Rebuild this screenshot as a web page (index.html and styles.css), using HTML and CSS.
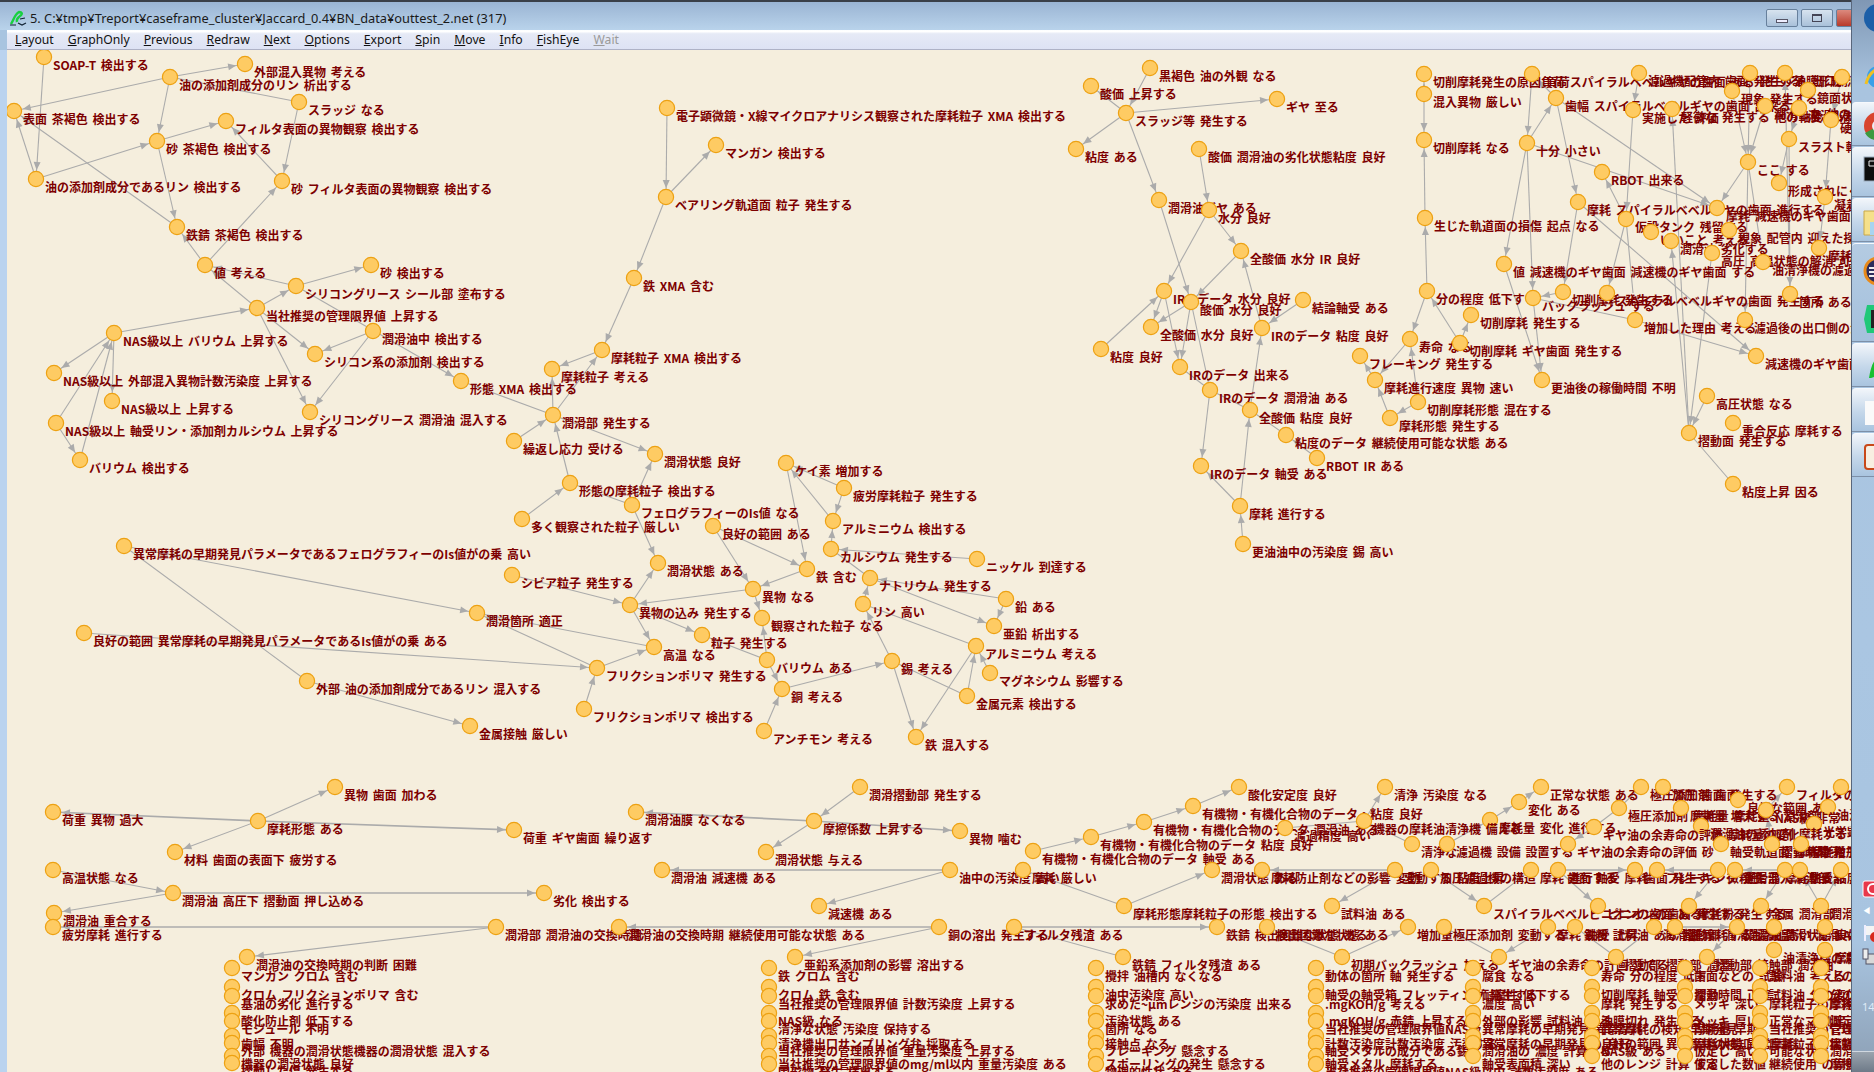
FILE: index.html
```html
<!DOCTYPE html>
<html lang="ja">
<head>
<meta charset="utf-8">
<title>Pajek</title>
<link rel="stylesheet" href="styles.css">
</head>
<body>
<div class="window">
<header class="titlebar">
<svg class="appicon" viewBox="0 0 18 16"><path class="ic-g" d="M2 14C5 9 6 4 10 2c3 0 4 2 1 4-2 2-4 3-3 6"/><path class="ic-k" d="M1 15h6M9 13l4 2 4-2M11 9l5-1"/></svg>
<span class="title">5. C:¥tmp¥Treport¥caseframe_cluster¥Jaccard_0.4¥BN_data¥outtest_2.net (317)</span>
<div class="winbtn"><span class="b"><i class="min"></i></span><span class="b"><i class="max"></i></span><span class="b close">✕</span></div>
</header>
<nav class="menubar">
<span><u>L</u>ayout</span><span><u>G</u>raphOnly</span><span><u>P</u>revious</span><span><u>R</u>edraw</span><span><u>N</u>ext</span><span><u>O</u>ptions</span><span><u>E</u>xport</span><span><u>S</u>pin</span><span><u>M</u>ove</span><span><u>I</u>nfo</span><span><u>F</u>ishEye</span><span class="off"><u>W</u>ait</span>
</nav>
<main class="client">
<svg class="net" viewBox="7 50 1844 1022" width="1844" height="1022">
<defs><marker id="a" markerUnits="userSpaceOnUse" markerWidth="10" markerHeight="8" refX="17" refY="3.5" orient="auto" overflow="visible"><path class="head" d="M0 0L8 3.5L0 7z"/></marker></defs>
<g class="plain">
<path d="M170 77L299 102"/><path d="M461 381L553 415"/><path d="M570 483L632 505"/><path d="M702 635L767 660"/><path d="M976 646L863 604"/><path d="M967 696L892 661"/><path d="M831 549L870 578"/><path d="M654 647L477 613"/><path d="M124 546L307 681"/><path d="M1191 302L1210 390"/><path d="M1180 367L1210 390"/><path d="M1210 390L1250 410"/><path d="M1250 410L1286 435"/><path d="M1533 298L1635 320"/><path d="M1748 162L1763 262"/><path d="M1689 433L1733 484"/><path d="M1626 219L1633 293"/><path d="M1023 870L1124 906"/><path d="M1014 927L1123 957"/><path d="M1285 828L1364 821"/><path d="M1364 821L1412 844"/><path d="M1531 870L1484 906"/><path d="M1342 957L1267 927"/><path d="M1499 957L1444 927"/><path d="M1616 957L1575 927"/><path d="M1616 957L1654 927"/><path d="M1594 827L1619 808"/><path d="M1619 808L1641 787"/>
</g>
<g class="edges" marker-end="url(#a)">
<path d="M44 57L36 179"/><path d="M170 77L245 64"/><path d="M170 77L14 111"/><path d="M170 77L157 141"/><path d="M299 102L282 181"/><path d="M282 181L226 121"/><path d="M157 141L226 121"/><path d="M36 179L157 141"/><path d="M36 179L14 111"/><path d="M177 227L14 111"/><path d="M157 141L177 227"/><path d="M205 265L177 227"/><path d="M205 265L282 181"/><path d="M257 308L205 265"/><path d="M296 286L205 265"/><path d="M257 308L296 286"/><path d="M296 286L371 265"/><path d="M114 333L257 308"/><path d="M257 308L315 354"/><path d="M257 308L310 412"/><path d="M373 331L315 354"/><path d="M373 331L310 412"/><path d="M296 286L461 381"/><path d="M114 333L54 373"/><path d="M114 333L112 401"/><path d="M56 423L114 333"/><path d="M80 460L114 333"/><path d="M56 423L80 460"/><path d="M553 415L552 369"/><path d="M553 415L602 350"/><path d="M602 350L552 369"/><path d="M514 441L553 415"/><path d="M634 278L602 350"/>
<path d="M570 483L553 415"/><path d="M553 415L655 454"/><path d="M522 519L570 483"/><path d="M632 505L658 563"/><path d="M632 505L655 454"/><path d="M844 488L786 463"/><path d="M833 521L786 463"/><path d="M786 463L807 569"/><path d="M844 488L833 521"/><path d="M831 549L833 521"/><path d="M977 559L831 549"/><path d="M713 526L807 569"/><path d="M713 526L753 589"/><path d="M807 569L753 589"/><path d="M753 589L630 605"/><path d="M753 589L762 618"/><path d="M630 605L658 563"/><path d="M630 605L654 647"/><path d="M630 605L702 635"/><path d="M512 575L630 605"/><path d="M767 660L762 618"/><path d="M767 660L782 689"/><path d="M764 731L782 689"/><path d="M782 689L892 661"/><path d="M892 661L863 604"/><path d="M892 661L916 737"/><path d="M976 646L916 737"/><path d="M967 696L976 646"/><path d="M990 673L976 646"/><path d="M863 604L870 578"/><path d="M1006 599L870 578"/><path d="M1006 599L994 626"/><path d="M870 578L994 626"/><path d="M597 668L654 647"/><path d="M584 709L597 668"/><path d="M597 668L477 613"/><path d="M124 546L477 613"/><path d="M84 633L597 668"/><path d="M307 681L470 726"/>
<path d="M667 108L666 197"/><path d="M666 197L716 145"/><path d="M666 197L634 278"/>
<path d="M1150 68L1126 113"/><path d="M1126 113L1091 86"/><path d="M1126 113L1277 99"/><path d="M1126 113L1076 149"/><path d="M1126 113L1159 200"/><path d="M1199 149L1209 210"/><path d="M1209 210L1164 291"/><path d="M1209 210L1241 251"/><path d="M1159 200L1191 302"/><path d="M1241 251L1191 302"/><path d="M1191 302L1151 327"/><path d="M1262 328L1241 251"/><path d="M1303 300L1262 328"/><path d="M1101 349L1164 291"/><path d="M1164 291L1151 327"/><path d="M1164 291L1180 367"/><path d="M1191 302L1180 367"/><path d="M1210 390L1201 466"/><path d="M1250 410L1262 328"/><path d="M1240 506L1250 410"/><path d="M1240 506L1201 466"/><path d="M1243 544L1240 506"/><path d="M1317 458L1286 435"/>
<path d="M1424 94L1424 74"/><path d="M1424 94L1424 140"/><path d="M1425 218L1424 140"/><path d="M1427 291L1425 218"/><path d="M1427 291L1410 339"/><path d="M1460 343L1427 291"/><path d="M1460 343L1471 315"/><path d="M1410 339L1375 380"/><path d="M1375 380L1360 356"/><path d="M1390 418L1375 380"/><path d="M1418 402L1390 418"/><path d="M1418 402L1410 339"/><path d="M1532 74L1527 143"/><path d="M1527 143L1556 98"/><path d="M1556 98L1532 74"/><path d="M1556 98L1717 208"/><path d="M1556 98L1578 202"/><path d="M1527 143L1504 264"/><path d="M1527 143L1533 298"/><path d="M1527 143L1717 208"/><path d="M1626 219L1602 172"/><path d="M1633 110L1626 219"/><path d="M1639 73L1633 110"/><path d="M1578 202L1563 292"/><path d="M1626 219L1607 293"/><path d="M1578 202L1756 356"/><path d="M1504 264L1542 380"/><path d="M1533 298L1542 380"/><path d="M1563 292L1533 298"/><path d="M1635 320L1756 356"/><path d="M1732 91L1748 162"/><path d="M1750 73L1748 162"/><path d="M1765 106L1748 162"/><path d="M1748 162L1717 208"/><path d="M1748 162L1745 320"/><path d="M1799 108L1789 139"/><path d="M1790 294L1785 73"/><path d="M1789 139L1790 294"/><path d="M1789 139L1779 183"/><path d="M1842 77L1831 120"/><path d="M1831 120L1825 197"/><path d="M1825 197L1819 248"/><path d="M1689 433L1672 109"/><path d="M1689 433L1671 241"/><path d="M1712 253L1689 433"/><path d="M1707 396L1689 433"/>
<path d="M1033 851L1091 837"/><path d="M1091 837L1144 822"/><path d="M1144 822L1193 806"/><path d="M1193 806L1239 787"/><path d="M1124 906L1212 870"/>
<path d="M258 821L335 787"/><path d="M258 821L175 852"/><path d="M860 787L814 821"/><path d="M814 821L766 852"/><path d="M950 870L819 906"/><path d="M496 927L247 957"/><path d="M939 927L795 957"/><path d="M53 870L173 893"/><path d="M173 893L54 913"/><path d="M1364 821L1385 787"/><path d="M1447 844L1490 820"/><path d="M1490 820L1519 802"/><path d="M1519 802L1541 787"/><path d="M1594 827L1568 844"/><path d="M1395 870L1332 906"/><path d="M1431 870L1484 906"/><path d="M1558 870L1598 906"/><path d="M1718 870L1689 906"/><path d="M1785 870L1761 906"/><path d="M1821 906L1800 870"/><path d="M1821 906L1841 870"/><path d="M1342 957L1408 927"/><path d="M1548 927L1499 957"/><path d="M1737 927L1707 957"/><path d="M1766 810L1787 787"/><path d="M1772 844L1766 810"/>
<g class="thick"><path d="M258 821L53 812"/><path d="M258 821L514 830"/><path d="M173 893L544 893"/><path d="M496 927L53 927"/><path d="M814 821L636 812"/><path d="M814 821L960 831"/><path d="M950 870L662 870"/><path d="M939 927L619 927"/><path d="M1014 927L1217 927"/><path d="M1395 870L1262 870"/><path d="M1558 870L1635 870"/><path d="M1718 870L1657 870"/><path d="M1785 870L1735 870"/><path d="M1675 927L1737 927"/></g>
</g>
<g class="nodes">
<g transform="translate(44 57)"><circle/><text>SOAP-T 検出する</text></g>
<g transform="translate(245 64)"><circle/><text>外部混入異物 考える</text></g>
<g transform="translate(170 77)"><circle/><text>油の添加剤成分のリン 析出する</text></g>
<g transform="translate(299 102)"><circle/><text>スラッジ なる</text></g>
<g transform="translate(14 111)"><circle/><text>表面 茶褐色 検出する</text></g>
<g transform="translate(226 121)"><circle/><text>フィルタ表面の異物観察 検出する</text></g>
<g transform="translate(157 141)"><circle/><text>砂 茶褐色 検出する</text></g>
<g transform="translate(36 179)"><circle/><text>油の添加剤成分であるリン 検出する</text></g>
<g transform="translate(282 181)"><circle/><text>砂 フィルタ表面の異物観察 検出する</text></g>
<g transform="translate(177 227)"><circle/><text>鉄錆 茶褐色 検出する</text></g>
<g transform="translate(205 265)"><circle/><text>値 考える</text></g>
<g transform="translate(371 265)"><circle/><text>砂 検出する</text></g>
<g transform="translate(296 286)"><circle/><text>シリコングリース シール部 塗布する</text></g>
<g transform="translate(257 308)"><circle/><text>当社推奨の管理限界値 上昇する</text></g>
<g transform="translate(373 331)"><circle/><text>潤滑油中 検出する</text></g>
<g transform="translate(114 333)"><circle/><text>NAS級以上 バリウム 上昇する</text></g>
<g transform="translate(315 354)"><circle/><text>シリコン系の添加剤 検出する</text></g>
<g transform="translate(54 373)"><circle/><text>NAS級以上 外部混入異物計数汚染度 上昇する</text></g>
<g transform="translate(461 381)"><circle/><text>形態 XMA 検出する</text></g>
<g transform="translate(112 401)"><circle/><text>NAS級以上 上昇する</text></g>
<g transform="translate(310 412)"><circle/><text>シリコングリース 潤滑油 混入する</text></g>
<g transform="translate(56 423)"><circle/><text>NAS級以上 軸受リン・添加剤カルシウム 上昇する</text></g>
<g transform="translate(552 369)"><circle/><text>摩耗粒子 考える</text></g>
<g transform="translate(602 350)"><circle/><text>摩耗粒子 XMA 検出する</text></g>
<g transform="translate(553 415)"><circle/><text>潤滑部 発生する</text></g>
<g transform="translate(80 460)"><circle/><text>バリウム 検出する</text></g>
<g transform="translate(514 441)"><circle/><text>繰返し応力 受ける</text></g>
<g transform="translate(655 454)"><circle/><text>潤滑状態 良好</text></g>
<g transform="translate(570 483)"><circle/><text>形態の摩耗粒子 検出する</text></g>
<g transform="translate(522 519)"><circle/><text>多く観察された粒子 厳しい</text></g>
<g transform="translate(632 505)"><circle/><text>フェログラフィーのIs値 なる</text></g>
<g transform="translate(786 463)"><circle/><text>ケイ素 増加する</text></g>
<g transform="translate(844 488)"><circle/><text>疲労摩耗粒子 発生する</text></g>
<g transform="translate(833 521)"><circle/><text>アルミニウム 検出する</text></g>
<g transform="translate(713 526)"><circle/><text>良好の範囲 ある</text></g>
<g transform="translate(831 549)"><circle/><text>カルシウム 発生する</text></g>
<g transform="translate(807 569)"><circle/><text>鉄 含む</text></g>
<g transform="translate(977 559)"><circle/><text>ニッケル 到達する</text></g>
<g transform="translate(658 563)"><circle/><text>潤滑状態 ある</text></g>
<g transform="translate(512 575)"><circle/><text>シビア粒子 発生する</text></g>
<g transform="translate(870 578)"><circle/><text>ナトリウム 発生する</text></g>
<g transform="translate(753 589)"><circle/><text>異物 なる</text></g>
<g transform="translate(1006 599)"><circle/><text>鉛 ある</text></g>
<g transform="translate(863 604)"><circle/><text>リン 高い</text></g>
<g transform="translate(630 605)"><circle/><text>異物の込み 発生する</text></g>
<g transform="translate(762 618)"><circle/><text>観察された粒子 なる</text></g>
<g transform="translate(994 626)"><circle/><text>亜鉛 析出する</text></g>
<g transform="translate(477 613)"><circle/><text>潤滑箇所 適正</text></g>
<g transform="translate(702 635)"><circle/><text>粒子 発生する</text></g>
<g transform="translate(976 646)"><circle/><text>アルミニウム 考える</text></g>
<g transform="translate(654 647)"><circle/><text>高温 なる</text></g>
<g transform="translate(767 660)"><circle/><text>バリウム ある</text></g>
<g transform="translate(892 661)"><circle/><text>錫 考える</text></g>
<g transform="translate(597 668)"><circle/><text>フリクションポリマ 発生する</text></g>
<g transform="translate(990 673)"><circle/><text>マグネシウム 影響する</text></g>
<g transform="translate(782 689)"><circle/><text>銅 考える</text></g>
<g transform="translate(967 696)"><circle/><text>金属元素 検出する</text></g>
<g transform="translate(584 709)"><circle/><text>フリクションポリマ 検出する</text></g>
<g transform="translate(764 731)"><circle/><text>アンチモン 考える</text></g>
<g transform="translate(916 737)"><circle/><text>鉄 混入する</text></g>
<g transform="translate(124 546)"><circle/><text>異常摩耗の早期発見パラメータであるフェログラフィーのIs値がの乗 高い</text></g>
<g transform="translate(84 633)"><circle/><text>良好の範囲 異常摩耗の早期発見パラメータであるIs値がの乗 ある</text></g>
<g transform="translate(307 681)"><circle/><text>外部 油の添加剤成分であるリン 混入する</text></g>
<g transform="translate(470 726)"><circle/><text>金属接触 厳しい</text></g>
<g transform="translate(667 108)"><circle/><text>電子顕微鏡・X線マイクロアナリシス観察された摩耗粒子 XMA 検出する</text></g>
<g transform="translate(716 145)"><circle/><text>マンガン 検出する</text></g>
<g transform="translate(666 197)"><circle/><text>ベアリング軌道面 粒子 発生する</text></g>
<g transform="translate(634 278)"><circle/><text>鉄 XMA 含む</text></g>
<g transform="translate(1150 68)"><circle/><text>黒褐色 油の外観 なる</text></g>
<g transform="translate(1091 86)"><circle/><text>酸価 上昇する</text></g>
<g transform="translate(1126 113)"><circle/><text>スラッジ等 発生する</text></g>
<g transform="translate(1277 99)"><circle/><text>ギヤ 至る</text></g>
<g transform="translate(1076 149)"><circle/><text>粘度 ある</text></g>
<g transform="translate(1199 149)"><circle/><text>酸価 潤滑油の劣化状態粘度 良好</text></g>
<g transform="translate(1159 200)"><circle/><text>潤滑油ギヤ ある</text></g>
<g transform="translate(1209 210)"><circle/><text>水分 良好</text></g>
<g transform="translate(1241 251)"><circle/><text>全酸価 水分 IR 良好</text></g>
<g transform="translate(1164 291)"><circle/><text>IRのデータ 水分 良好</text></g>
<g transform="translate(1191 302)"><circle/><text>酸価 水分 良好</text></g>
<g transform="translate(1303 300)"><circle/><text>結論軸受 ある</text></g>
<g transform="translate(1151 327)"><circle/><text>全酸価 水分 良好</text></g>
<g transform="translate(1262 328)"><circle/><text>IRのデータ 粘度 良好</text></g>
<g transform="translate(1101 349)"><circle/><text>粘度 良好</text></g>
<g transform="translate(1180 367)"><circle/><text>IRのデータ 出来る</text></g>
<g transform="translate(1210 390)"><circle/><text>IRのデータ 潤滑油 ある</text></g>
<g transform="translate(1250 410)"><circle/><text>全酸価 粘度 良好</text></g>
<g transform="translate(1286 435)"><circle/><text>粘度のデータ 継続使用可能な状態 ある</text></g>
<g transform="translate(1317 458)"><circle/><text>RBOT IR ある</text></g>
<g transform="translate(1201 466)"><circle/><text>IRのデータ 軸受 ある</text></g>
<g transform="translate(1240 506)"><circle/><text>摩耗 進行する</text></g>
<g transform="translate(1243 544)"><circle/><text>更油油中の汚染度 錫 高い</text></g>
<g transform="translate(1424 74)"><circle/><text>切削摩耗発生の原因 負荷</text></g>
<g transform="translate(1532 74)"><circle/><text>負荷 スパイラルベベルギヤの歯面 ある</text></g>
<g transform="translate(1639 73)"><circle/><text>濾過機配管内 歯面 発生する</text></g>
<g transform="translate(1750 73)"><circle/><text>発生する 出口側</text></g>
<g transform="translate(1785 73)"><circle/><text>油膜形成 油膜形成</text></g>
<g transform="translate(1842 77)"><circle/><text>形成</text></g>
<g transform="translate(1424 94)"><circle/><text>混入異物 厳しい</text></g>
<g transform="translate(1732 91)"><circle/><text>現象 発生する</text></g>
<g transform="translate(1808 90)"><circle/><text>鏡面状態</text></g>
<g transform="translate(1556 98)"><circle/><text>歯幅 スパイラルベベルギヤの歯面 出来る</text></g>
<g transform="translate(1633 110)"><circle/><text>実施した 評価</text></g>
<g transform="translate(1672 109)"><circle/><text>軽微な 発生する 他の軸受 潤滑した</text></g>
<g transform="translate(1765 106)"><circle/><text>潤滑した 他の軸受</text></g>
<g transform="translate(1799 108)"><circle/><text>潤滑した 結果</text></g>
<g transform="translate(1831 120)"><circle/><text>硬化</text></g>
<g transform="translate(1424 140)"><circle/><text>切削摩耗 なる</text></g>
<g transform="translate(1527 143)"><circle/><text>十分 小さい</text></g>
<g transform="translate(1789 139)"><circle/><text>スラスト軸受</text></g>
<g transform="translate(1748 162)"><circle/><text>ここ する</text></g>
<g transform="translate(1602 172)"><circle/><text>RBOT 出来る</text></g>
<g transform="translate(1779 183)"><circle/><text>形成されにくい</text></g>
<g transform="translate(1825 197)"><circle/><text>凝着</text></g>
<g transform="translate(1578 202)"><circle/><text>摩耗 スパイラルベベルギヤの歯面 進行する</text></g>
<g transform="translate(1717 208)"><circle/><text>摩耗 減速機のギヤ歯面</text></g>
<g transform="translate(1425 218)"><circle/><text>生じた軌道面の損傷 起点 なる</text></g>
<g transform="translate(1626 219)"><circle/><text>仮設タンク 残留する</text></g>
<g transform="translate(1651 232)"><circle/><text>いいこと 考える</text></g>
<g transform="translate(1729 230)"><circle/><text>現象 配管内 迎えた探傷</text></g>
<g transform="translate(1671 241)"><circle/><text>潤滑油 劣化する</text></g>
<g transform="translate(1819 248)"><circle/><text>摩耗 苛酷</text></g>
<g transform="translate(1712 253)"><circle/><text>高圧 高温状態の解消 可能</text></g>
<g transform="translate(1763 262)"><circle/><text>油清浄機の濾過精度</text></g>
<g transform="translate(1504 264)"><circle/><text>値 減速機のギヤ歯面 減速機のギヤ歯面 する</text></g>
<g transform="translate(1427 291)"><circle/><text>分の程度 低下する</text></g>
<g transform="translate(1533 298)"><circle/><text>バックラッシュ する</text></g>
<g transform="translate(1563 292)"><circle/><text>切削摩耗 発生する</text></g>
<g transform="translate(1607 293)"><circle/><text>スパイラルベベルギヤの歯面 発生する</text></g>
<g transform="translate(1790 294)"><circle/><text>箇所 ある</text></g>
<g transform="translate(1471 315)"><circle/><text>切削摩耗 発生する</text></g>
<g transform="translate(1635 320)"><circle/><text>増加した理由 考える</text></g>
<g transform="translate(1745 320)"><circle/><text>濾過後の出口側の油</text></g>
<g transform="translate(1410 339)"><circle/><text>寿命 なる</text></g>
<g transform="translate(1460 343)"><circle/><text>切削摩耗 ギヤ歯面 発生する</text></g>
<g transform="translate(1360 356)"><circle/><text>フレーキング 発生する</text></g>
<g transform="translate(1756 356)"><circle/><text>減速機のギヤ歯面</text></g>
<g transform="translate(1375 380)"><circle/><text>摩耗進行速度 異物 速い</text></g>
<g transform="translate(1542 380)"><circle/><text>更油後の稼働時間 不明</text></g>
<g transform="translate(1707 396)"><circle/><text>高圧状態 なる</text></g>
<g transform="translate(1418 402)"><circle/><text>切削摩耗形態 混在する</text></g>
<g transform="translate(1390 418)"><circle/><text>摩耗形態 発生する</text></g>
<g transform="translate(1733 423)"><circle/><text>重合反応 摩耗する</text></g>
<g transform="translate(1689 433)"><circle/><text>摺動面 発生する</text></g>
<g transform="translate(1733 484)"><circle/><text>粘度上昇 因る</text></g>
<g transform="translate(335 787)"><circle/><text>異物 歯面 加わる</text></g>
<g transform="translate(53 812)"><circle/><text>荷重 異物 過大</text></g>
<g transform="translate(258 821)"><circle/><text>摩耗形態 ある</text></g>
<g transform="translate(514 830)"><circle/><text>荷重 ギヤ歯面 繰り返す</text></g>
<g transform="translate(175 852)"><circle/><text>材料 歯面の表面下 疲労する</text></g>
<g transform="translate(53 870)"><circle/><text>高温状態 なる</text></g>
<g transform="translate(173 893)"><circle/><text>潤滑油 高圧下 摺動面 押し込める</text></g>
<g transform="translate(544 893)"><circle/><text>劣化 検出する</text></g>
<g transform="translate(54 913)"><circle/><text>潤滑油 重合する</text></g>
<g transform="translate(53 927)"><circle/><text>疲労摩耗 進行する</text></g>
<g transform="translate(496 927)"><circle/><text>潤滑部 潤滑油の交換時期</text></g>
<g transform="translate(619 927)"><circle/><text>潤滑油の交換時期 継続使用可能な状態 ある</text></g>
<g transform="translate(247 957)"><circle/><text>潤滑油の交換時期の判断 困難</text></g>
<g transform="translate(232 968)"><circle/><text>マンガン クロム 含む</text></g>
<g transform="translate(232 987)"><circle/><text>クロム フリクションポリマ 含む</text></g>
<g transform="translate(232 996)"><circle/><text>基油の劣化 進行する</text></g>
<g transform="translate(232 1013)"><circle/><text>酸化防止剤 低下する</text></g>
<g transform="translate(232 1021)"><circle/><text>モジュール 不明</text></g>
<g transform="translate(232 1036)"><circle/><text>歯幅 不明</text></g>
<g transform="translate(232 1043)"><circle/><text>外部 機器の潤滑状態機器の潤滑状態 混入する</text></g>
<g transform="translate(232 1056)"><circle/><text>機器の潤滑状態 良好</text></g>
<g transform="translate(232 1063)"><circle/><text>摺動した傷 発生する</text></g>
<g transform="translate(860 787)"><circle/><text>潤滑摺動部 発生する</text></g>
<g transform="translate(636 812)"><circle/><text>潤滑油膜 なくなる</text></g>
<g transform="translate(814 821)"><circle/><text>摩擦係数 上昇する</text></g>
<g transform="translate(960 831)"><circle/><text>異物 噛む</text></g>
<g transform="translate(766 852)"><circle/><text>潤滑状態 与える</text></g>
<g transform="translate(662 870)"><circle/><text>潤滑油 減速機 ある</text></g>
<g transform="translate(950 870)"><circle/><text>油中の汚染度 高い</text></g>
<g transform="translate(819 906)"><circle/><text>減速機 ある</text></g>
<g transform="translate(939 927)"><circle/><text>銅の溶出 発生する</text></g>
<g transform="translate(795 957)"><circle/><text>亜鉛系添加剤の影響 溶出する</text></g>
<g transform="translate(769 968)"><circle/><text>鉄 クロム 含む</text></g>
<g transform="translate(769 987)"><circle/><text>クロム 鉄 含む</text></g>
<g transform="translate(769 996)"><circle/><text>当社推奨の管理限界値 計数汚染度 上昇する</text></g>
<g transform="translate(769 1013)"><circle/><text>NAS級 なる</text></g>
<g transform="translate(769 1021)"><circle/><text>清浄な状態 汚染度 保持する</text></g>
<g transform="translate(769 1036)"><circle/><text>清浄機出口サンプリング弁 採取する</text></g>
<g transform="translate(769 1043)"><circle/><text>当社推奨の管理限界値 重量汚染度 上昇する</text></g>
<g transform="translate(769 1056)"><circle/><text>当社推奨の管理限界値のmg/ml以内 重量汚染度 ある</text></g>
<g transform="translate(769 1064)"><circle/><text>固形物 発生 検出する</text></g>
<g transform="translate(1239 787)"><circle/><text>酸化安定度 良好</text></g>
<g transform="translate(1193 806)"><circle/><text>有機物・有機化合物のデータ・粘度 良好</text></g>
<g transform="translate(1144 822)"><circle/><text>有機物・有機化合物のデータ 潤滑油 ある</text></g>
<g transform="translate(1091 837)"><circle/><text>有機物・有機化合物のデータ 粘度 良好</text></g>
<g transform="translate(1033 851)"><circle/><text>有機物・有機化合物のデータ 軸受 ある</text></g>
<g transform="translate(1023 870)"><circle/><text>摩耗 厳しい</text></g>
<g transform="translate(1212 870)"><circle/><text>潤滑状態 ある</text></g>
<g transform="translate(1124 906)"><circle/><text>摩耗形態摩耗粒子の形態 検出する</text></g>
<g transform="translate(1014 927)"><circle/><text>フィルタ残渣 ある</text></g>
<g transform="translate(1217 927)"><circle/><text>鉄錆 検出困難な状態 ある</text></g>
<g transform="translate(1123 957)"><circle/><text>鉄錆 フィルタ残渣 ある</text></g>
<g transform="translate(1096 968)"><circle/><text>攪拌 油槽内 なくなる</text></g>
<g transform="translate(1096 987)"><circle/><text>油中汚染度 高い</text></g>
<g transform="translate(1096 996)"><circle/><text>求めた~μmレンジの汚染度 出来る</text></g>
<g transform="translate(1096 1013)"><circle/><text>汚染状態 ある</text></g>
<g transform="translate(1096 1021)"><circle/><text>箇所 なる</text></g>
<g transform="translate(1096 1036)"><circle/><text>接触点 なる</text></g>
<g transform="translate(1096 1043)"><circle/><text>フレーキング 懸念する</text></g>
<g transform="translate(1096 1056)"><circle/><text>スポーリングの発生 懸念する</text></g>
<g transform="translate(1096 1064)"><circle/><text>物理的性状 ある</text></g>
<g transform="translate(1385 787)"><circle/><text>清浄 汚染度 なる</text></g>
<g transform="translate(1541 787)"><circle/><text>正常な状態 ある</text></g>
<g transform="translate(1641 787)"><circle/><text>極圧添加剤 歯面</text></g>
<g transform="translate(1663 787)"><circle/><text>加圧 歯面 発生する</text></g>
<g transform="translate(1787 787)"><circle/><text>フィルタの目詰まり</text></g>
<g transform="translate(1841 787)"><circle/><text>濾過</text></g>
<g transform="translate(1738 800)"><circle/><text>良好な範囲 ある</text></g>
<g transform="translate(1519 802)"><circle/><text>変化 ある</text></g>
<g transform="translate(1828 807)"><circle/><text>油清浄機</text></g>
<g transform="translate(1619 808)"><circle/><text>極圧添加剤 摩耗量 摩耗量</text></g>
<g transform="translate(1681 808)"><circle/><text>摩耗量 増大する 潤滑剤</text></g>
<g transform="translate(1766 810)"><circle/><text>NAS級 非常</text></g>
<g transform="translate(1490 820)"><circle/><text>摩耗量 変化 進行する</text></g>
<g transform="translate(1364 821)"><circle/><text>機器の摩耗油清浄機 備える</text></g>
<g transform="translate(1814 824)"><circle/><text>光学顕微鏡</text></g>
<g transform="translate(1701 826)"><circle/><text>潤滑油の添加剤 摩耗する</text></g>
<g transform="translate(1594 827)"><circle/><text>ギヤ油の余寿命の評価 摩耗量の変化</text></g>
<g transform="translate(1285 828)"><circle/><text>濾過精度 高い</text></g>
<g transform="translate(1412 844)"><circle/><text>清浄な</text></g>
<g transform="translate(1447 844)"><circle/><text>濾過機 設備 設置する</text></g>
<g transform="translate(1568 844)"><circle/><text>ギヤ油の余寿命の評価 砂</text></g>
<g transform="translate(1721 844)"><circle/><text>軸受軌道面 摩耗粒子</text></g>
<g transform="translate(1772 844)"><circle/><text>摺動時間 増加</text></g>
<g transform="translate(1801 844)"><circle/><text>摩耗粒子 発生</text></g>
<g transform="translate(1262 870)"><circle/><text>摩耗防止剤などの影響 変動</text></g>
<g transform="translate(1395 870)"><circle/><text>変動する 粘度上昇</text></g>
<g transform="translate(1431 870)"><circle/><text>加圧濾過機の構造</text></g>
<g transform="translate(1531 870)"><circle/><text>摩耗 進行する</text></g>
<g transform="translate(1558 870)"><circle/><text>歯面 軸受 摩耗</text></g>
<g transform="translate(1635 870)"><circle/><text>歯面 発生する</text></g>
<g transform="translate(1657 870)"><circle/><text>フレーキング 発生</text></g>
<g transform="translate(1718 870)"><circle/><text>微粒子 混入</text></g>
<g transform="translate(1735 870)"><circle/><text>潤滑部 摩耗する</text></g>
<g transform="translate(1785 870)"><circle/><text>潤滑部 粘度</text></g>
<g transform="translate(1800 870)"><circle/><text>軸受部 摩耗</text></g>
<g transform="translate(1841 870)"><circle/><text>異物</text></g>
<g transform="translate(1332 906)"><circle/><text>試料油 ある</text></g>
<g transform="translate(1484 906)"><circle/><text>スパイラルベベルピニオンの歯面 ある</text></g>
<g transform="translate(1598 906)"><circle/><text>ピニオンの歯面 発生する</text></g>
<g transform="translate(1689 906)"><circle/><text>摩耗粉 発生する</text></g>
<g transform="translate(1761 906)"><circle/><text>金属 潤滑部</text></g>
<g transform="translate(1821 906)"><circle/><text>潤滑部 潤滑油</text></g>
<g transform="translate(1267 927)"><circle/><text>検出困難な状態 ある</text></g>
<g transform="translate(1408 927)"><circle/><text>増加量</text></g>
<g transform="translate(1444 927)"><circle/><text>極圧添加剤 変動する</text></g>
<g transform="translate(1548 927)"><circle/><text>摩耗 軸受 上昇</text></g>
<g transform="translate(1575 927)"><circle/><text>鉄粉 試料油 ある 固形</text></g>
<g transform="translate(1654 927)"><circle/><text>潤滑油 摩耗する 混入</text></g>
<g transform="translate(1675 927)"><circle/><text>摺動部 潤滑油 高温</text></g>
<g transform="translate(1737 927)"><circle/><text>潤滑油 高い 潤滑</text></g>
<g transform="translate(1774 927)"><circle/><text>潤滑状態 良好</text></g>
<g transform="translate(1825 927)"><circle/><text>NAS級</text></g>
<g transform="translate(1774 950)"><circle/><text>油清浄機の濾過</text></g>
<g transform="translate(1825 950)"><circle/><text>摩耗</text></g>
<g transform="translate(1342 957)"><circle/><text>初期バックラッシュ 加える</text></g>
<g transform="translate(1499 957)"><circle/><text>ギヤ油の余寿命の計画 立てる</text></g>
<g transform="translate(1616 957)"><circle/><text>摺動部 摺動部 潤滑</text></g>
<g transform="translate(1707 957)"><circle/><text>摺動部 接触部 潤滑油</text></g>
<g transform="translate(1316 968)"><circle/><text>動体の箇所 軸 発生する</text></g>
<g transform="translate(1316 987)"><circle/><text>軸受の軸受箱 フレッティング 発生する</text></g>
<g transform="translate(1316 996)"><circle/><text>.mgKOH/g 考える</text></g>
<g transform="translate(1316 1013)"><circle/><text>.mgKOH/g 赤錆 上昇する</text></g>
<g transform="translate(1316 1021)"><circle/><text>当社推奨の管理限界値NAS級</text></g>
<g transform="translate(1316 1036)"><circle/><text>計数汚染度計数汚染度 汚染する</text></g>
<g transform="translate(1316 1043)"><circle/><text>軸受メタルの成分である錫</text></g>
<g transform="translate(1316 1056)"><circle/><text>軸受メタル 摩耗する</text></g>
<g transform="translate(1316 1064)"><circle/><text>当社推奨の管理限界値NAS級以内 計数汚染度 ある</text></g>
<g transform="translate(1473 968)"><circle/><text>腐食 なる</text></g>
<g transform="translate(1473 987)"><circle/><text>耐摩性 低下する</text></g>
<g transform="translate(1473 996)"><circle/><text>濃度 高い</text></g>
<g transform="translate(1473 1013)"><circle/><text>外部の影響 試料油 ある</text></g>
<g transform="translate(1473 1021)"><circle/><text>異常摩耗の早期発見 異常摩耗</text></g>
<g transform="translate(1473 1036)"><circle/><text>異常摩耗の早期発見の 良好</text></g>
<g transform="translate(1473 1043)"><circle/><text>潤滑油の 濃度 計算する</text></g>
<g transform="translate(1473 1056)"><circle/><text>軸受表面積 深い</text></g>
<g transform="translate(1592 968)"><circle/><text>寿命 分の程度 低下</text></g>
<g transform="translate(1592 987)"><circle/><text>切削摩耗 軸受内 摺動</text></g>
<g transform="translate(1592 996)"><circle/><text>摩耗 発生する</text></g>
<g transform="translate(1592 1013)"><circle/><text>油膜切れ 発生する</text></g>
<g transform="translate(1592 1021)"><circle/><text>異常摩耗の検知 早期発見</text></g>
<g transform="translate(1592 1036)"><circle/><text>良好の範囲 異常摩耗の検知</text></g>
<g transform="translate(1592 1043)"><circle/><text>NAS級 ある</text></g>
<g transform="translate(1592 1056)"><circle/><text>他のレンジ 計算 する</text></g>
<g transform="translate(1685 968)"><circle/><text>歯面などの 試験</text></g>
<g transform="translate(1685 987)"><circle/><text>潤滑時間 正確</text></g>
<g transform="translate(1685 996)"><circle/><text>メッキ 深い</text></g>
<g transform="translate(1685 1013)"><circle/><text>メッキ 厚い</text></g>
<g transform="translate(1685 1021)"><circle/><text>摩耗量 早期</text></g>
<g transform="translate(1685 1036)"><circle/><text>摩耗状態 異常摩耗</text></g>
<g transform="translate(1685 1043)"><circle/><text>仮定し 高い</text></g>
<g transform="translate(1685 1056)"><circle/><text>仮定した数値</text></g>
<g transform="translate(1760 968)"><circle/><text>試料油 考える 摩耗</text></g>
<g transform="translate(1760 987)"><circle/><text>試料油 分の変化</text></g>
<g transform="translate(1760 996)"><circle/><text>摩耗粒子の摩耗</text></g>
<g transform="translate(1760 1013)"><circle/><text>正常なマ 測定</text></g>
<g transform="translate(1760 1021)"><circle/><text>当社推奨の管理</text></g>
<g transform="translate(1760 1036)"><circle/><text>摩耗粒子の状態 継続</text></g>
<g transform="translate(1760 1043)"><circle/><text>可能な状態</text></g>
<g transform="translate(1760 1056)"><circle/><text>継続使用 の摩擦</text></g>
<g transform="translate(1821 968)"><circle/><text>上の 軸</text></g>
<g transform="translate(1821 987)"><circle/><text>分の</text></g>
<g transform="translate(1821 996)"><circle/><text>摩擦</text></g>
<g transform="translate(1821 1013)"><circle/><text>測定</text></g>
<g transform="translate(1821 1021)"><circle/><text>管理</text></g>
<g transform="translate(1821 1036)"><circle/><text>摩耗</text></g>
<g transform="translate(1821 1043)"><circle/><text>潤滑</text></g>
<g transform="translate(1821 1056)"><circle/><text>摩擦</text></g>
</g>
</svg>
</main>
</div>
<aside class="taskbar">
<div class="tb-top">
<svg class="ico orb" viewBox="0 0 30 30"><circle cx="15" cy="15" r="14" fill="#1c5fa8"/><path d="M15 1a14 14 0 0 1 14 14H15z" fill="#e8862a"/><path d="M15 15h14a14 14 0 0 1-14 14z" fill="#5aa83a"/></svg>
<svg class="ico ie" viewBox="0 0 30 30"><circle cx="15" cy="15" r="11" fill="#3aa0e8"/><path d="M3 22C6 8 20 2 28 5" fill="none" stroke="#f0c020" stroke-width="3"/></svg>
</div>
<div class="tb"><svg class="ico" viewBox="0 0 30 30"><circle cx="15" cy="15" r="14" fill="#d8442e"/><path d="M15 15L2 22a14 14 0 0 0 13 7z" fill="#3c9a40"/><circle cx="15" cy="15" r="6" fill="#e9eef5"/></svg></div>
<div class="tb dark"><svg class="ico" viewBox="0 0 30 30"><rect x="1" y="1" width="28" height="24" fill="#0d0d0d" stroke="#9ab" /><path d="M6 5h5M6 5v5h5" fill="none" stroke="#eee"/></svg></div>
<div class="tb"><svg class="ico" viewBox="0 0 30 30"><path d="M1 4h10l3 4h15v20H1z" fill="#f5e08a" stroke="#c8a84a"/><rect x="7" y="15" width="22" height="13" fill="#a8d4f0"/></svg></div>
<div class="tb tall"><svg class="ico" viewBox="0 0 30 30"><circle cx="15" cy="15" r="13" fill="#2c2c5c" stroke="#e88a1a" stroke-width="3"/><path d="M6 12h22M6 16h22M6 20h22" stroke="#eee" stroke-width="2"/></svg><svg class="ico" viewBox="0 0 30 30"><path d="M4 1h24l1 28H4L1 15z" fill="#1fc878"/><rect x="8" y="6" width="20" height="18" fill="#222"/></svg></div>
<div class="tb"><svg class="ico" viewBox="0 0 30 30"><path d="M6 26C8 14 10 8 18 2c-2 6-1 8 2 6-1 6-4 8-8 10 3 1 6 1 10-2-4 8-8 8-14 10z" fill="#18c030"/></svg></div>
<div class="tb"><svg class="ico" viewBox="0 0 30 30"><rect x="2" y="4" width="26" height="24" fill="#fafafa"/></svg></div>
<div class="tb"><svg class="ico" viewBox="0 0 30 30"><rect x="2" y="3" width="28" height="24" rx="3" fill="#f8efe2" stroke="#c8481a" stroke-width="2"/><path d="M18 8h10v14H18z" fill="#e0401a"/></svg></div>
<div class="tb-grow"></div>
<div class="tray">
<svg class="tray-i" viewBox="0 0 20 20"><rect x="1" y="2" width="18" height="16" rx="2" fill="#e8384a" stroke="#fff"/><circle cx="11" cy="10" r="5" fill="none" stroke="#fff" stroke-width="2"/></svg>
<span class="chev">◀</span>
<svg class="tray-i" viewBox="0 0 20 20"><path d="M3 2v16" stroke="#eef" stroke-width="2"/><path d="M4 3h11v9H4z" fill="#f4f4f4"/><circle cx="13" cy="14" r="5" fill="#d8281c"/></svg>
<svg class="tray-i" viewBox="0 0 20 20"><rect x="4" y="7" width="13" height="10" fill="#d8d8d8" stroke="#556"/><rect x="1" y="2" width="5" height="10" fill="#eee" stroke="#556"/></svg>
<span class="clock">14</span>
</div>
<div class="tb-show"></div>
</aside>
</body>
</html>
```
FILE: styles.css
```css
html,body{margin:0;height:100%;overflow:hidden}
body{display:flex;width:1874px;height:1072px;font-family:"Noto Sans",sans-serif;background:#a8c4e0}
.window{width:1851px;display:flex;flex-direction:column;overflow:hidden;flex:none}
.titlebar{height:30px;box-sizing:border-box;border-top:2px solid #3a3f48;display:flex;align-items:center;padding:4px 0 0 9px;background:linear-gradient(#9ab4d3,#b9d3eb)}
.appicon{width:18px;height:16px;margin-right:3px}
.ic-g{fill:none;stroke:#18d040;stroke-width:2.4}
.ic-k{fill:none;stroke:#123;stroke-width:1.2}
.title{font-size:12.8px;color:#1a1a1a;white-space:nowrap;flex:1}
.winbtn{display:flex;gap:3px;margin-top:-1px;margin-right:-32px}
.winbtn .b{width:30px;height:16px;border:1px solid #67809c;border-radius:2px;background:linear-gradient(#d7e3ef,#a9c1da);display:flex;align-items:center;justify-content:center;box-sizing:content-box}
.winbtn .close{width:45px;background:linear-gradient(#dc8a7e,#b83a2a);color:#fff;font-size:11px}
.min{width:10px;height:2px;border:1px solid #556;background:#eef;margin-top:6px}
.max{width:8px;height:5px;border:1px solid #445;border-top-width:2px}
.menubar{height:20px;box-sizing:border-box;margin-left:7px;padding-left:8px;display:flex;gap:14px;align-items:center;font-size:12.2px;color:#111;background:linear-gradient(#fdfeff 0,#fff 8%,#e6eaf6 20%,#dde2f4);border-bottom:1px solid #aeb2c6}
.menubar span{white-space:nowrap}
.menubar .off{color:#9a9a9a}
.client{flex:1;margin-left:0;border-left:7px solid #bad3ef;background:#f5eedd;overflow:hidden;display:flex}
.net{display:block;background:#f5eedd;flex:none}
.net path{fill:none;stroke:#ababab;stroke-width:1.1}
.net .thick path{stroke-width:1.7}
.net .head{fill:#ababab;stroke:none}
.nodes circle{r:7.6px;fill:#fecb63;stroke:#eda112;stroke-width:1.2}
.nodes text{transform:translate(9px,13px);font-family:"Noto Sans CJK JP","Noto Sans",sans-serif;font-size:12px;font-weight:700;word-spacing:2px;fill:#7d0000;white-space:pre}
.taskbar{width:23px;flex:none;border-left:1px solid #59677c;box-sizing:border-box;display:flex;flex-direction:column;overflow:hidden;background:linear-gradient(#7f97b4 0,#a9c4df 8%,#aac6e2 60%,#a8c4e0 88%,#8c9fb4 100%)}
.tb-top{height:102px;display:flex;flex-direction:column;gap:29px;padding:3px 0 0 11px;box-sizing:border-box}
.tb{height:44px;box-sizing:border-box;border-top:1px solid #f6f9fd;border-bottom:1px solid #7d90a8;border-top-left-radius:4px;background:linear-gradient(#f1f5fa,#c4d7ea 55%,#a9c4df);padding:8px 0 0 11px;flex:none;margin-bottom:1px;overflow:hidden}
.tb.dark{height:50px}
.tb.tall{height:99px;background:linear-gradient(#b4cbe2,#a5c1dd);display:flex;flex-direction:column;gap:18px;padding-top:12px}
.ico{width:30px;height:30px;display:block;flex:none}
.orb{margin-top:0}
.tb-grow{flex:1}
.tray{display:flex;flex-direction:column;align-items:flex-start;padding-left:10px;gap:4px;height:172px;box-sizing:border-box}
.tray-i{width:20px;height:20px;flex:none}
.chev{font-size:9px;color:#fff;line-height:16px}
.clock{font-size:11px;color:#dfeaf7;margin-top:28px}
.tb-show{height:20px;background:linear-gradient(#9aa4ae,#6e7a88);border-top:1px solid #d0d8e0;flex:none}
```
